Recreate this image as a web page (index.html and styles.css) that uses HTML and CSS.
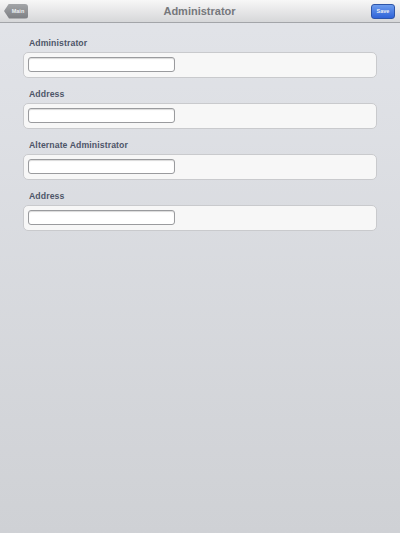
FILE: index.html
```html
<!DOCTYPE html>
<html lang="en">
<head>
    <meta charset="UTF-8">
    <meta name="viewport" content="width=device-width, initial-scale=1.0">
    <title>Administrator</title>
    <link rel="stylesheet" href="styles.css">
</head>
<body>

    <div class="navbar">
        <span class="btn-back">Main</span>
        <span class="titulo">Administrator</span>
        <span class="btn-save">Save</span>
    </div>

    <div class="form">
        <div class="grupo">
            <label class="rotulo">Administrator</label>
            <div class="caixa"><input type="text" class="campo"></div>
        </div>
        <div class="grupo">
            <label class="rotulo">Address</label>
            <div class="caixa"><input type="text" class="campo"></div>
        </div>
        <div class="grupo">
            <label class="rotulo">Alternate Administrator</label>
            <div class="caixa"><input type="text" class="campo"></div>
        </div>
        <div class="grupo">
            <label class="rotulo">Address</label>
            <div class="caixa"><input type="text" class="campo"></div>
        </div>
    </div>

</body>
</html>
```

FILE: styles.css
```css
html, body {
    height: 100%;
}

body {
    margin: 0;
    font-family: "Liberation Sans", Arial, sans-serif;
    background: linear-gradient(#e2e4e9, #cfd1d5);
}

/* Barra superior */
.navbar {
    height: 22px;
    display: flex;
    align-items: center;
    justify-content: space-between;
    padding: 0 5px 0 4px;
    background: linear-gradient(#f7f7f7, #d6d7d9);
    border-bottom: 1px solid #a3a5a9;
}

.titulo {
    font-size: 11px;
    font-weight: bold;
    color: #76787c;
}

.btn-back, .btn-save {
    height: 15px;
    width: 24px;
    box-sizing: border-box;
    font-size: 5.5px;
    font-weight: bold;
    color: #eef0f3;
    display: flex;
    align-items: center;
    justify-content: center;
}

.btn-back {
    background: linear-gradient(#a3a5a8, #7c7e82);
    clip-path: polygon(5px 0, 100% 0, 100% 100%, 5px 100%, 0 50%);
    border-radius: 0 3px 3px 0;
    padding-left: 4px;
}

.btn-save {
    background: linear-gradient(#6d9cee, #2f63d8);
    border: 1px solid #2e55a8;
    border-radius: 3px;
}

/* Formulario */
.form {
    padding: 4px 23px 0 23px;
}

.rotulo {
    display: block;
    padding: 10px 0 3px 6px;
    line-height: 12px;
    font-size: 8.7px;
    letter-spacing: 0.1px;
    font-weight: bold;
    color: #4d5568;
}

.caixa {
    height: 26px;
    box-sizing: border-box;
    padding: 4px 0 0 4px;
    background-color: #f7f7f7;
    border: 1px solid #c9cacd;
    border-radius: 5px;
}

.campo {
    display: block;
    margin: 0;
    padding: 0;
    width: 147px;
    height: 15px;
    box-sizing: border-box;
    background-color: #fff;
    border: 1px solid #9a9b9e;
    border-radius: 3px;
    box-shadow: inset 0 1px 1px rgba(0, 0, 0, 0.15);
}
```
